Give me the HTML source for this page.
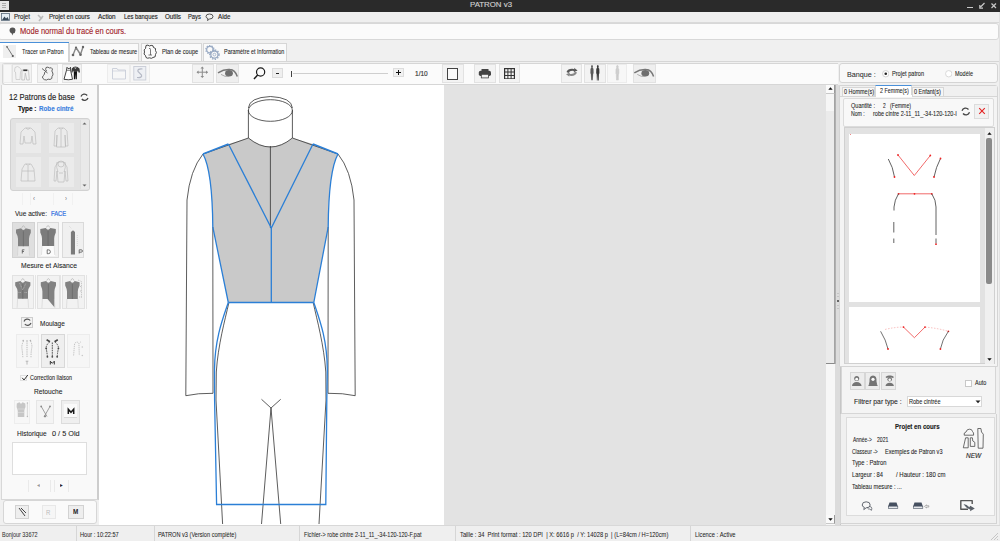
<!DOCTYPE html>
<html><head><meta charset="utf-8"><title>PATRON v3</title>
<style>
html,body{margin:0;padding:0;}
body{width:1000px;height:541px;position:relative;overflow:hidden;background:#f0f0f0;font-family:"Liberation Sans",sans-serif;color:#222;}
body div, body svg{position:absolute;box-sizing:border-box;}
.t{white-space:nowrap;line-height:1;}
</style></head><body>

<div style="left:0px;top:0px;width:1000px;height:11.5px;background:#2a2a2a;"></div>
<div style="left:0px;top:0.5px;width:8.5px;height:9px;background:#e4e4e4;"></div>
<div style="left:1.5px;top:2.5px;width:4px;height:0.8px;background:#aaa;"></div>
<div style="left:1.5px;top:4.5px;width:4px;height:0.8px;background:#aaa;"></div>
<div style="left:1.5px;top:6.5px;width:4px;height:0.8px;background:#aaa;"></div>
<svg style="left:466.80px;top:-2.10px" width="48.00" height="12.60"><text x="3" y="9.10" font-family="Liberation Sans" font-size="7" fill="#cfcfcf" stroke="#cfcfcf" stroke-width="0.14" textLength="42.00" lengthAdjust="spacingAndGlyphs" >PATRON v3</text></svg>
<div style="left:967px;top:6.5px;width:5.5px;height:1.1px;background:#c8c8c8;"></div>
<svg style="left:978px;top:1.5px;" width="8" height="8" viewBox="0 0 8 8"><path d="M6.5 1 L2.5 5 M1.8 3 V6.2 H5" stroke="#c8c8c8" stroke-width="1.2" fill="none"/></svg>
<svg style="left:990px;top:1.5px;" width="8" height="8" viewBox="0 0 8 8"><path d="M1.5 1.5 L6 6 M6 1.5 L1.5 6" stroke="#c8c8c8" stroke-width="1.2" fill="none"/></svg>
<div style="left:0px;top:11.5px;width:1000px;height:11.5px;background:#efefef;border-bottom:1px solid #dadada;"></div>
<svg style="left:1px;top:13px;" width="9" height="8" viewBox="0 0 9 8"><rect x="0.5" y="0.5" width="8" height="7" fill="#e6eef5" stroke="#5a6a7a" stroke-width="0.8"/><path d="M1 7 L3.5 3.5 L5 5.5 L6.5 4 L8 7Z" fill="#3a4a5a"/></svg>
<svg style="left:10.70px;top:10.55px" width="21.90" height="11.70"><text x="3" y="8.45" font-family="Liberation Sans" font-size="6.5" fill="#1e1e1e" stroke="#1e1e1e" stroke-width="0.14" textLength="15.90" lengthAdjust="spacingAndGlyphs" >Projet</text></svg>
<svg style="left:36px;top:12.5px;" width="9" height="9" viewBox="0 0 9 9"><path d="M2 2 L6 6 M3 8 L7 3" stroke="#bbb" stroke-width="1.6" fill="none"/></svg>
<svg style="left:45.70px;top:10.55px" width="46.80" height="11.70"><text x="3" y="8.45" font-family="Liberation Sans" font-size="6.5" fill="#1e1e1e" stroke="#1e1e1e" stroke-width="0.14" textLength="40.80" lengthAdjust="spacingAndGlyphs" >Projet en cours</text></svg>
<svg style="left:95.40px;top:10.55px" width="23.60" height="11.70"><text x="3" y="8.45" font-family="Liberation Sans" font-size="6.5" fill="#1e1e1e" stroke="#1e1e1e" stroke-width="0.14" textLength="17.60" lengthAdjust="spacingAndGlyphs" >Action</text></svg>
<svg style="left:120.60px;top:10.55px" width="39.60" height="11.70"><text x="3" y="8.45" font-family="Liberation Sans" font-size="6.5" fill="#1e1e1e" stroke="#1e1e1e" stroke-width="0.14" textLength="33.60" lengthAdjust="spacingAndGlyphs" >Les banques</text></svg>
<svg style="left:162.00px;top:10.55px" width="22.00" height="11.70"><text x="3" y="8.45" font-family="Liberation Sans" font-size="6.5" fill="#1e1e1e" stroke="#1e1e1e" stroke-width="0.14" textLength="16.00" lengthAdjust="spacingAndGlyphs" >Outils</text></svg>
<svg style="left:184.60px;top:10.55px" width="18.80" height="11.70"><text x="3" y="8.45" font-family="Liberation Sans" font-size="6.5" fill="#1e1e1e" stroke="#1e1e1e" stroke-width="0.14" textLength="12.80" lengthAdjust="spacingAndGlyphs" >Pays</text></svg>
<svg style="left:205px;top:13px;" width="9" height="8" viewBox="0 0 9 8"><path d="M1 3.5 Q1 1 4.5 1 Q8 1 8 3.5 Q8 6 4.5 6 L2.5 7.5 L3 5.6 Q1 5 1 3.5Z" fill="none" stroke="#444" stroke-width="0.9"/></svg>
<svg style="left:215.40px;top:10.55px" width="18.40" height="11.70"><text x="3" y="8.45" font-family="Liberation Sans" font-size="6.5" fill="#1e1e1e" stroke="#1e1e1e" stroke-width="0.14" textLength="12.40" lengthAdjust="spacingAndGlyphs" >Aide</text></svg>
<div style="left:0px;top:22.6px;width:1000px;height:18px;background:#f0f0f0;"></div>
<div style="left:-2px;top:22.6px;width:1000.5px;height:17.8px;background:#fbfbfb;border:1px solid #d8d8d8;border-radius:3px;"></div>
<svg style="left:9px;top:26.5px;" width="7" height="9" viewBox="0 0 7 9"><path d="M3.5 0.5 Q6.5 0.5 6.5 3.5 Q6.5 6 4 6.5 L3.5 8.5 L2.5 6.3 Q0.5 5.5 0.5 3.5 Q0.5 0.5 3.5 0.5Z" fill="#555"/></svg>
<svg style="left:16.90px;top:22.69px" width="112.20" height="15.66"><text x="3" y="11.31" font-family="Liberation Sans" font-size="8.7" fill="#a3262b" stroke="#a3262b" stroke-width="0.14" textLength="106.20" lengthAdjust="spacingAndGlyphs" >Mode normal du tracé en cours.</text></svg>
<div style="left:0px;top:40.5px;width:1000px;height:21px;background:#f0f0f0;"></div>
<div style="left:0px;top:60.5px;width:1000px;height:1px;background:#d6d6d6;"></div>
<div style="left:0px;top:42px;width:69px;height:19.5px;background:#ffffff;border-right:1px solid #d4d4d4;"></div>
<div style="left:0px;top:41.6px;width:69px;height:1.6px;background:#4a90d9;"></div>
<div style="left:69.3px;top:43.2px;width:70.2px;height:17.8px;background:#fafafa;border:1px solid #d6d6d6;border-bottom:none;"></div>
<div style="left:140.5px;top:43.2px;width:61px;height:17.8px;background:#fafafa;border:1px solid #d6d6d6;border-bottom:none;"></div>
<div style="left:202.8px;top:43.2px;width:84.5px;height:17.8px;background:#fafafa;border:1px solid #d6d6d6;border-bottom:none;"></div>
<svg style="left:3px;top:45px;" width="13" height="13" viewBox="0 0 13 13"><rect x="0" y="0" width="13" height="13" fill="#efefef"/><path d="M4 1.8 L9.8 11" stroke="#777" stroke-width="1"/><circle cx="4" cy="1.8" r="0.9" fill="#666"/><circle cx="9.8" cy="11" r="1.1" fill="#555"/></svg>
<svg style="left:19.20px;top:45.16px" width="47.50" height="12.24"><text x="3" y="8.84" font-family="Liberation Sans" font-size="6.8" fill="#1e1e1e" stroke="#1e1e1e" stroke-width="0.08" textLength="41.50" lengthAdjust="spacingAndGlyphs" >Tracer un Patron</text></svg>
<svg style="left:71px;top:45px;" width="14" height="12" viewBox="0 0 14 12"><path d="M2 10 L5 2.5 L9.5 9.5 L12 2" stroke="#888" stroke-width="1.4" fill="none" stroke-linejoin="round"/><circle cx="2" cy="10" r="1.3" fill="#666"/><circle cx="5" cy="2.5" r="1.1" fill="#666"/><circle cx="9.5" cy="9.8" r="1.3" fill="#666"/><circle cx="12" cy="2" r="1.2" fill="#666"/></svg>
<svg style="left:87.00px;top:45.16px" width="53.20" height="12.24"><text x="3" y="8.84" font-family="Liberation Sans" font-size="6.8" fill="#1e1e1e" stroke="#1e1e1e" stroke-width="0.08" textLength="47.20" lengthAdjust="spacingAndGlyphs" >Tableau de mesure</text></svg>
<svg style="left:0;top:0" width="300" height="70" viewBox="0 0 300 70"><path d="M146 45.5 Q148 44.5 149.5 46 Q151 44.8 153 45.8 L153.5 47.5 Q156.5 48 155.5 50.5 Q157.3 52.5 155.5 54.5 Q156 57.5 153 57.5 Q151.5 59 149.5 57.8 Q147.5 58.8 146 57.5 L145.5 55.5 Q143 54.5 144.5 52 Q143.3 49.5 145.5 48.5Z" fill="none" stroke="#333" stroke-width="0.9"/><path d="M149 48.5 Q150.5 48 150.5 49.5 V55 M148.5 55 H152" stroke="#444" stroke-width="0.7" fill="none"/></svg>
<svg style="left:158.50px;top:45.16px" width="42.20" height="12.24"><text x="3" y="8.84" font-family="Liberation Sans" font-size="6.8" fill="#1e1e1e" stroke="#1e1e1e" stroke-width="0.08" textLength="36.20" lengthAdjust="spacingAndGlyphs" >Plan de coupe</text></svg>
<svg style="left:0;top:0" width="300" height="70" viewBox="0 0 300 70"><g fill="none" stroke="#9aabc4"><circle cx="209.9" cy="49.6" r="3.2" stroke-width="1.2"/><circle cx="209.9" cy="49.6" r="4" stroke-width="1.4" stroke-dasharray="1.3 1.2"/><circle cx="214.4" cy="54.6" r="3.6" fill="#fafafa" stroke-width="1.3"/><circle cx="214.4" cy="54.6" r="4.6" stroke-width="1.5" stroke-dasharray="1.4 1.3"/><circle cx="214.4" cy="54.6" r="1.4" stroke-width="0.8"/></g></svg>
<svg style="left:220.50px;top:45.16px" width="66.40" height="12.24"><text x="3" y="8.84" font-family="Liberation Sans" font-size="6.8" fill="#1e1e1e" stroke="#1e1e1e" stroke-width="0.08" textLength="60.40" lengthAdjust="spacingAndGlyphs" >Paramètre et Information</text></svg>
<div style="left:1.5px;top:63px;width:836px;height:21.5px;background:#fbfbfb;border:1px solid #d6d6d6;border-right:none;border-radius:3px 0 0 3px;"></div>
<div style="left:2.5px;top:64px;width:9.0px;height:18.799999999999997px;background:#f7f7f7;border:1px solid #ececec;"></div>
<div style="left:12.3px;top:64px;width:19.900000000000002px;height:18.799999999999997px;background:#f3f3f3;border:1px solid #e2e2e2;"></div>
<div style="left:37.2px;top:64px;width:20.5px;height:18.799999999999997px;background:#f3f3f3;border:1px solid #e2e2e2;"></div>
<div style="left:62.2px;top:64px;width:20.299999999999997px;height:18.799999999999997px;background:#f3f3f3;border:1px solid #e2e2e2;"></div>
<div style="left:107px;top:64px;width:23px;height:18.799999999999997px;background:#f7f7f7;border:1px solid #ececec;"></div>
<div style="left:130px;top:64px;width:20px;height:18.799999999999997px;background:#f7f7f7;border:1px solid #ececec;"></div>
<div style="left:191.7px;top:64px;width:22.80000000000001px;height:18.799999999999997px;background:#f3f3f3;border:1px solid #e2e2e2;"></div>
<div style="left:216px;top:64px;width:23.19999999999999px;height:18.799999999999997px;background:#efefef;border:1px solid #e2e2e2;"></div>
<div style="left:441.7px;top:64px;width:22.19999999999999px;height:18.799999999999997px;background:#f3f3f3;border:1px solid #e2e2e2;"></div>
<div style="left:473.6px;top:64px;width:22.69999999999999px;height:18.799999999999997px;background:#f3f3f3;border:1px solid #e2e2e2;"></div>
<div style="left:499.2px;top:64px;width:21.30000000000001px;height:18.799999999999997px;background:#f3f3f3;border:1px solid #e2e2e2;"></div>
<div style="left:560.8px;top:64px;width:21.200000000000045px;height:18.799999999999997px;background:#f3f3f3;border:1px solid #e2e2e2;"></div>
<div style="left:584.3px;top:64px;width:22.0px;height:18.799999999999997px;background:#f3f3f3;border:1px solid #e2e2e2;"></div>
<div style="left:607.4px;top:64px;width:19.800000000000068px;height:18.799999999999997px;background:#f7f7f7;border:1px solid #ececec;"></div>
<div style="left:632.7px;top:64px;width:23.59999999999991px;height:18.799999999999997px;background:#efefef;border:1px solid #e2e2e2;"></div>
<svg style="left:0;top:0" width="700" height="90" viewBox="0 0 700 90"><path d="M15 67.5 L17.5 66.5 L19.5 67.5 L21.5 70 L20.5 72 L20 79.5 L16 79.5 L15.5 72 L14.5 71.5Z" fill="none" stroke="#c4c4c4" stroke-width="0.7"/><path d="M22 70 L28.5 70 L29.3 80 L26.8 80 L25.3 73 L24.5 80 L21.8 80Z" fill="none" stroke="#b8b8b8" stroke-width="0.7"/><rect x="23.3" y="69.5" width="4" height="1.6" fill="#333"/><path d="M46 67.5 Q48 66.5 49.5 68 Q51.5 67 52.5 69 Q51 71 52.8 73 Q53.5 75 52 76.5 Q52.5 79 50 79.5 Q48 78.5 46.5 80 Q44 80 43 78.5 Q41.5 77 43.5 75.5 Q45 74 44.5 72.5 L46.5 71 Q45 69.5 46 67.5Z" fill="none" stroke="#555" stroke-width="0.9"/><path d="M42 68.5 L47.5 73" stroke="#555" stroke-width="0.9"/><path d="M67 67.3 L68 68.6 L69.5 68.6 L70.5 67.3 L70.6 70.3 L72.5 79.3 Q68.5 80.2 64 79.3 L66.5 70.3Z" fill="#fff" stroke="#222" stroke-width="0.85"/><path d="M66.5 70.3 H70.6" stroke="#222" stroke-width="0.6"/><path d="M73.5 67 L75.3 66.5 L77.5 67 L79.5 68.5 L80 72.5 L78.5 72.5 L78 70.5 L77 72 L73.8 72 L73 70.5 L72.5 72.5 L71.3 72.5 L71.8 68.5Z" fill="#3a3a3a"/><path d="M73.8 72 L77 72 L76.8 79.3 L75.6 79.3 L75.4 74 L75 79.3 L73.9 79.3Z" fill="#111"/><path d="M74.6 66.8 L75.4 69 L76.3 66.8" stroke="#ddd" stroke-width="0.5" fill="none"/><path d="M112.5 68.5 L117 68.5 L118 70 L125.5 70 L125.5 79 L112.5 79Z" fill="none" stroke="#c8cdd8" stroke-width="0.9"/><path d="M112.5 71 H125.5" stroke="#c8cdd8" stroke-width="0.7"/><rect x="133.8" y="66.5" width="12" height="13.5" fill="#eef0f4" stroke="#c8ccd6" stroke-width="0.9"/><path d="M142.5 69 Q137 68.5 138 71.5 Q140 73.5 141.5 75 Q142.5 78 137 77.5" stroke="#b5b9c5" stroke-width="1.2" fill="none"/><path d="M202.3 67.3 V77.2 M197.3 72.2 H207.3" stroke="#8c8c8c" stroke-width="1"/><path d="M202.3 66.5 L200.5 68.6 H204.1Z M202.3 78 L200.5 75.9 H204.1Z M196.5 72.2 L198.6 70.4 V74Z M208.1 72.2 L206 70.4 V74Z" fill="#8c8c8c"/><path d="M218 72.9 Q224 69.10000000000001 230 69.60000000000001 Q235 69.9 237.3 76.5" stroke="#777" stroke-width="1.5" fill="none"/><ellipse cx="229" cy="73.2" rx="3.9" ry="3.2" fill="#6e6e6e"/><path d="M221 74.4 Q225 77.2 229 76.4" stroke="#999" stroke-width="0.8" fill="none"/><path d="M634.3 72.9 Q640.3 69.10000000000001 646.3 69.60000000000001 Q651.3 69.9 653.5999999999999 76.5" stroke="#777" stroke-width="1.5" fill="none"/><ellipse cx="645.3" cy="73.2" rx="3.9" ry="3.2" fill="#6e6e6e"/><path d="M637.3 74.4 Q641.3 77.2 645.3 76.4" stroke="#999" stroke-width="0.8" fill="none"/><circle cx="260.6" cy="72" r="4.1" fill="none" stroke="#1a1a1a" stroke-width="1.2"/><path d="M257.6 75 L254 79.1" stroke="#1a1a1a" stroke-width="1.5"/><rect x="481.5" y="69" width="7" height="2.5" fill="#444"/><rect x="478.8" y="70.8" width="12.2" height="5.2" rx="1.8" fill="#444"/><rect x="481.3" y="74.3" width="7.2" height="3.6" fill="#f0f0f0" stroke="#444" stroke-width="0.8"/><path d="M566.5 72 Q568 68.5 572.5 68.8 L574.5 69.3 L574 67.8 L577.6 70.5 L573.6 72.2 L574 71 Q570 70 568.5 73Z" fill="#555"/><path d="M577 72.5 Q575.5 76.2 571 75.9 L569 75.4 L569.5 76.8 L566 74.2 L570 72.5 L569.6 73.8 Q573.5 74.6 575 71.8Z" fill="#888"/><path transform="translate(592,64.9) scale(0.57375,0.95625)" d="M0 0 Q1.6 0 1.6 1.7 Q1.6 2.6 1 3 L2.6 4 L2.8 9 L2 9.2 L1.6 16 L0.4 16 L0 10 L-0.4 16 L-1.6 16 L-2 9.2 L-2.8 9 L-2.6 4 L-1 3 Q-1.6 2.6 -1.6 1.7 Q-1.6 0 0 0Z" fill="#5a5a5a" stroke="none" stroke-width="0.6"/><path transform="translate(597.8,64.9) scale(0.5812499999999999,0.96875)" d="M0 0 Q1.6 0 1.6 1.7 Q1.6 2.6 1 3 L2.6 4 L2.8 9 L2 9.2 L1.6 16 L0.4 16 L0 10 L-0.4 16 L-1.6 16 L-2 9.2 L-2.8 9 L-2.6 4 L-1 3 Q-1.6 2.6 -1.6 1.7 Q-1.6 0 0 0Z" fill="#3a3a3a" stroke="none" stroke-width="0.6"/><path transform="translate(617.4,65.3) scale(0.555,0.925)" d="M0 0 Q1.6 0 1.6 1.7 Q1.6 2.6 1 3 L2.6 4 L2.8 9 L2 9.2 L1.6 16 L0.4 16 L0 10 L-0.4 16 L-1.6 16 L-2 9.2 L-2.8 9 L-2.6 4 L-1 3 Q-1.6 2.6 -1.6 1.7 Q-1.6 0 0 0Z" fill="#cfcfcf" stroke="#c4c4c4" stroke-width="0.6"/></svg>
<div style="left:272.2px;top:67.8px;width:10.5px;height:10px;background:#efefef;border:1px solid #dcdcdc;"></div>
<div style="left:276.2px;top:73.1px;width:3px;height:1.4px;background:#222;"></div>
<div style="left:291.2px;top:71px;width:1.3px;height:5.5px;background:#444;"></div>
<div style="left:292.5px;top:72.5px;width:95px;height:0.9px;background:#cfcfcf;"></div>
<div style="left:393px;top:67.7px;width:10.8px;height:9.8px;background:#f1f1f1;border:1px solid #ddd;"></div>
<div style="left:395.6px;top:72px;width:5.6px;height:1.3px;background:#111;"></div>
<div style="left:397.75px;top:69.9px;width:1.3px;height:5.6px;background:#111;"></div>
<svg style="left:412.00px;top:67.16px" width="18.70" height="12.24"><text x="3" y="8.84" font-family="Liberation Sans" font-size="6.8" fill="#333" stroke="#333" stroke-width="0.14" textLength="12.70" lengthAdjust="spacingAndGlyphs" >1/10</text></svg>
<div style="left:447px;top:68px;width:11px;height:11.5px;background:#fafafa;border:1.3px solid #444;"></div>
<svg style="left:503.5px;top:67.5px;" width="11" height="11.5" viewBox="0 0 11 11.5"><rect x="0.6" y="0.6" width="9.8" height="10.3" fill="none" stroke="#333" stroke-width="1.2"/><path d="M3.9 0.6 V10.9 M7.1 0.6 V10.9 M0.6 4 H10.4 M0.6 7.5 H10.4" stroke="#333" stroke-width="1"/></svg>
<div style="left:1px;top:85px;width:98px;height:414.5px;background:#f9f9f9;border:1px solid #d8d8d8;border-right:2px solid #cdcdcd;border-top:none;"></div>
<svg style="left:6.20px;top:89.08px" width="71.80" height="15.12"><text x="3" y="10.92" font-family="Liberation Sans" font-size="8.4" fill="#1e1e1e" stroke="#1e1e1e" stroke-width="0.14" textLength="65.80" lengthAdjust="spacingAndGlyphs" >12 Patrons de base</text></svg>
<svg style="left:80px;top:93px;" width="9" height="8.5" viewBox="0 0 9 8.5"><path d="M7.2 2.5 A3.6 3.6 0 0 0 1 3.5" stroke="#444" stroke-width="1.3" fill="none"/><path d="M1.8 6 A3.6 3.6 0 0 0 8 5" stroke="#444" stroke-width="1.3" fill="none"/></svg>
<svg style="left:14.50px;top:102.29px" width="24.50" height="12.06"><text x="3" y="8.71" font-family="Liberation Sans" font-size="6.7" fill="#111" stroke="#111" stroke-width="0.14" textLength="18.50" lengthAdjust="spacingAndGlyphs" font-weight="bold">Type :</text></svg>
<svg style="left:36.30px;top:102.29px" width="40.50" height="12.06"><text x="3" y="8.71" font-family="Liberation Sans" font-size="6.7" fill="#3b7fe0" stroke="#3b7fe0" stroke-width="0.14" textLength="34.50" lengthAdjust="spacingAndGlyphs" font-weight="bold">Robe cintré</text></svg>
<div style="left:9.7px;top:118.3px;width:80.2px;height:72.4px;background:#e3e3e3;border:1px solid #d2d2d2;border-radius:3px;"></div>
<div style="left:15.5px;top:122.5px;width:25px;height:30.5px;background:#ebebeb;"></div>
<div style="left:48.8px;top:122.5px;width:25px;height:30.5px;background:#ebebeb;"></div>
<div style="left:15.5px;top:156.6px;width:25px;height:30px;background:#ebebeb;"></div>
<div style="left:48.8px;top:156.6px;width:25px;height:30px;background:#ebebeb;"></div>
<div style="left:79.5px;top:120px;width:9.2px;height:69px;background:#e9e9e9;border-left:1px solid #dedede;"></div>
<svg style="left:81.5px;top:121.5px;" width="5" height="3" viewBox="0 0 5 3"><path d="M0.5 2.5 L2.5 0.5 L4.5 2.5Z" fill="#666"/></svg>
<svg style="left:81.5px;top:183.5px;" width="5" height="3" viewBox="0 0 5 3"><path d="M0.5 0.5 L2.5 2.5 L4.5 0.5Z" fill="#666"/></svg>
<svg style="left:19px;top:126px;" width="18" height="24" viewBox="0 0 18 24"><path d="M6 2 L12 2 L16 6 L17 18 L14 18 L13 10 L12 17 L6 17 L5 10 L4 18 L1 18 L2 6Z" fill="none" stroke="#b2b2b2" stroke-width="0.55"/><path d="M7 2 Q9 5 11 2" fill="none" stroke="#b2b2b2" stroke-width="0.55"/></svg>
<svg style="left:52px;top:126px;" width="18" height="24" viewBox="0 0 18 24"><path d="M6 2 L12 2 L15 5 L16 20 L13.5 20 L13 9 L13.5 21 L4.5 21 L5 9 L4.5 20 L2 20 L3 5Z" fill="none" stroke="#b2b2b2" stroke-width="0.55"/><path d="M7 2 Q9 5 11 2 M9 4 V21" fill="none" stroke="#b2b2b2" stroke-width="0.55"/></svg>
<svg style="left:19px;top:161px;" width="18" height="23" viewBox="0 0 18 23"><path d="M6 3 L12 3 L15 8 L16 20 L2 20 L3 8Z" fill="none" stroke="#b2b2b2" stroke-width="0.55"/><path d="M7 3 Q9 6 11 3 M9 5 V20 M3 10 L15 10" fill="none" stroke="#b2b2b2" stroke-width="0.55"/></svg>
<svg style="left:52px;top:159px;" width="18" height="26" viewBox="0 0 18 26"><path d="M6 3 L12 3 L15 8 L16 22 L14 22 L13 12 L12 23 L6 23 L5 12 L4 22 L2 22 L3 8Z" fill="none" stroke="#b2b2b2" stroke-width="0.55"/><circle cx="9" cy="5" r="3" fill="none" stroke="#b2b2b2" stroke-width="0.55"/><path d="M5 3 Q4 9 6 13 M13 3 Q14 9 12 13 M7 14 L11 14" fill="none" stroke="#b2b2b2" stroke-width="0.55"/></svg>
<div style="left:22px;top:193px;width:0.8px;height:12px;background:#f1f1f1;"></div>
<div style="left:30px;top:193px;width:0.8px;height:12px;background:#f1f1f1;"></div>
<div style="left:53px;top:193px;width:0.8px;height:12px;background:#f1f1f1;"></div>
<div style="left:72px;top:193px;width:0.8px;height:12px;background:#f1f1f1;"></div>
<div class="t" style="left:32.8px;top:195.71px;font-size:6.60px;transform:scaleX(0.9091);transform-origin:left;color:#777;">‹</div>
<div class="t" style="left:64.5px;top:195.71px;font-size:6.60px;transform:scaleX(0.9091);transform-origin:left;color:#777;">›</div>
<svg style="left:12.20px;top:207.16px" width="38.00" height="12.24"><text x="3" y="8.84" font-family="Liberation Sans" font-size="6.8" fill="#1e1e1e" stroke="#1e1e1e" stroke-width="0.08" textLength="32.00" lengthAdjust="spacingAndGlyphs" >Vue active:</text></svg>
<svg style="left:47.80px;top:207.16px" width="21.20" height="12.24"><text x="3" y="8.84" font-family="Liberation Sans" font-size="6.8" fill="#2f6fe0" stroke="#2f6fe0" stroke-width="0.2" textLength="15.20" lengthAdjust="spacingAndGlyphs" >FACE</text></svg>
<div style="left:12.3px;top:221.7px;width:22.3px;height:35.9px;background:#dfdfdf;border:1px solid #d2d2d2;"></div>
<div style="left:37.3px;top:221.7px;width:21.9px;height:35.9px;background:#f0f0f0;border:1px solid #dadada;"></div>
<div style="left:62.2px;top:221.7px;width:22.3px;height:35.9px;background:#f0f0f0;border:1px solid #dadada;"></div>
<div style="left:18px;top:246.3px;width:11px;height:9.5px;background:#e9e9e9;"></div>
<div style="left:40.8px;top:245.9px;width:14px;height:10px;background:#fbfbfb;"></div>
<svg style="left:18.00px;top:258.90px" width="62.00" height="12.60"><text x="3" y="9.10" font-family="Liberation Sans" font-size="7" fill="#1e1e1e" stroke="#1e1e1e" stroke-width="0.08" textLength="56.00" lengthAdjust="spacingAndGlyphs" >Mesure et Aisance</text></svg>
<div style="left:12px;top:275.2px;width:22px;height:34px;background:#f2f2f2;border:1px solid #e2e2e2;"></div>
<div style="left:37.2px;top:275.2px;width:22.4px;height:34px;background:#f2f2f2;border:1px solid #e2e2e2;"></div>
<div style="left:62.4px;top:275.2px;width:22.8px;height:34px;background:#f2f2f2;border:1px solid #e2e2e2;"></div>
<div style="left:34.6px;top:275.2px;width:1.2px;height:34px;background:#e4e4e4;"></div>
<div style="left:60.2px;top:275.2px;width:1.2px;height:34px;background:#e4e4e4;"></div>
<div style="left:85.5px;top:275.2px;width:1.2px;height:34px;background:#e4e4e4;"></div>
<svg style="left:0;top:0" width="100" height="541" viewBox="0 0 100 541"><path d="M16 229.4 L21.099999999999998 228.20000000000002 Q23.4 231.8 25.7 228.20000000000002 L30.8 229.4 L30.8 232.8 Q29.2 235.8 29 238.8 L29 246.3  L18 246.3 L18 238.8 Q17.8 235.8 16 232.8Z" fill="#828282"/><path d="M23.4 231.3 V246.3" stroke="#5a5a5a" stroke-width="0.5"/><path d="M21.799999999999997 227.8 Q23.4 223.8 25.0 227.8" stroke="#aaa" stroke-width="0.6" fill="none"/><path d="M18 246.3 L17.5 255.3 M29 246.3 L29.5 255.3" stroke="#d0d0d0" stroke-width="0.6" fill="none"/><path d="M40.3 229.1 L45.75 227.9 Q48.05 231.5 50.349999999999994 227.9 L55.8 229.1 L55.8 232.5 Q54.400000000000006 235.5 54.2 238.5 L54.2 245.9  L42 245.9 L42 238.5 Q41.8 235.5 40.3 232.5Z" fill="#7c7c7c"/><path d="M48.05 231.0 V245.9" stroke="#5a5a5a" stroke-width="0.5"/><path d="M46.449999999999996 227.5 Q48.05 223.5 49.65 227.5" stroke="#aaa" stroke-width="0.6" fill="none"/><path d="M42 245.9 L41.5 254.9 M54.2 245.9 L54.7 254.9" stroke="#d0d0d0" stroke-width="0.6" fill="none"/><path d="M70.9 254.6 L70.9 232 L73 230.2 L75 232 L75 254.6Z" fill="#7a7a7a"/><path d="M77.3 235 V247 M69 226 L72 229" stroke="#c0c0c0" stroke-width="0.5" stroke-dasharray="1 1" fill="none"/><path d="M22.3 253.5 V249.8 H24.4 M22.3 251.5 H24" stroke="#555" stroke-width="0.8" fill="none"/><path d="M47.2 249.8 V253.7 H48.3 Q50.4 253.7 50.4 251.75 Q50.4 249.8 48.3 249.8Z" stroke="#555" stroke-width="0.8" fill="none"/><path d="M79.2 253.5 V249.8 H81 Q82.5 249.8 82.5 251 Q82.5 252.2 81 252.2 H79.2" stroke="#555" stroke-width="0.8" fill="none"/><path d="M15.2 282.20000000000005 L20.499999999999996 281.0 Q22.799999999999997 284.6 25.099999999999998 281.0 L30.4 282.20000000000005 L30.4 285.6 Q28.2 288.6 28 291.6 L28 298.8  L17.6 298.8 L17.6 291.6 Q17.400000000000002 288.6 15.2 285.6Z" fill="#828282"/><path d="M22.799999999999997 284.1 V298.8" stroke="#5a5a5a" stroke-width="0.5"/><path d="M21.199999999999996 280.6 Q22.799999999999997 276.6 24.4 280.6" stroke="#aaa" stroke-width="0.6" fill="none"/><path d="M17.6 298.8 L17.1 307.8 M28 298.8 L28.5 307.8" stroke="#d0d0d0" stroke-width="0.6" fill="none"/><path d="M19.5 283 L22.8 290 L26 283 M18.5 292.5 H21 M24.5 292.5 H27" stroke="#c8c8c8" stroke-width="0.6" stroke-dasharray="1 0.7" fill="none"/><path d="M40.8 282.20000000000005 L46.1 281.0 Q48.4 284.6 50.699999999999996 281.0 L56 282.20000000000005 L56 285.6 Q54.6 288.6 54.4 291.6 L54.4 299 L54.4 307.2 L47.5 299 L42.4 299 L42.4 291.6 Q42.199999999999996 288.6 40.8 285.6Z" fill="#828282"/><path d="M48.4 284.1 V299" stroke="#5a5a5a" stroke-width="0.5"/><path d="M46.8 280.6 Q48.4 276.6 50.0 280.6" stroke="#aaa" stroke-width="0.6" fill="none"/><path d="M42.4 299 L41.9 308 M54.4 299 L54.9 308" stroke="#d0d0d0" stroke-width="0.6" fill="none"/><path d="M65.2 282.20000000000005 L70.10000000000001 281.0 Q72.4 284.6 74.7 281.0 L79.6 282.20000000000005 L79.6 285.6 Q78.0 288.6 77.8 291.6 L77.8 299  L67 299 L67 291.6 Q66.8 288.6 65.2 285.6Z" fill="#828282"/><path d="M72.4 284.1 V299" stroke="#5a5a5a" stroke-width="0.5"/><path d="M70.80000000000001 280.6 Q72.4 276.6 74.0 280.6" stroke="#aaa" stroke-width="0.6" fill="none"/><path d="M67 299 L66.5 308 M77.8 299 L78.3 308" stroke="#d0d0d0" stroke-width="0.6" fill="none"/><path d="M78 280 L81.5 281.5 V298 M80 286.5 H82 M80 291 H82 M79 297 H81.5" stroke="#999" stroke-width="0.5" stroke-dasharray="1 0.8" fill="none"/></svg>
<div style="left:21.4px;top:317px;width:11.6px;height:11.2px;background:#f2f2f2;border:1px solid #cdcdcd;"></div>
<svg style="left:22.7px;top:318.4px;" width="9" height="8.5" viewBox="0 0 9 8.5"><path d="M7.2 2.5 A3.6 3.6 0 0 0 1 3.5" stroke="#555" stroke-width="1.2" fill="none"/><path d="M1.8 6 A3.6 3.6 0 0 0 8 5" stroke="#555" stroke-width="1.2" fill="none"/></svg>
<svg style="left:36.80px;top:316.90px" width="30.80" height="12.60"><text x="3" y="9.10" font-family="Liberation Sans" font-size="7" fill="#1e1e1e" stroke="#1e1e1e" stroke-width="0.08" textLength="24.80" lengthAdjust="spacingAndGlyphs" >Moulage</text></svg>
<div style="left:16px;top:334.3px;width:22.8px;height:33.3px;background:#f6f6f6;border:1px solid #ececec;"></div>
<div style="left:41px;top:334.3px;width:23.7px;height:33.3px;background:#efefef;border:1px solid #d8d8d8;"></div>
<div style="left:66.5px;top:334.3px;width:23.3px;height:33.3px;background:#f6f6f6;border:1px solid #ececec;"></div>
<svg style="left:0;top:0" width="100" height="541" viewBox="0 0 100 541"><g fill="none" stroke="#b4b4b4" stroke-width="0.9" stroke-dasharray="1.3 0.9"><path d="M23.5 341 Q21.5 345 21.9 348.3 Q22.5 352 22.8 357.2"/><path d="M30.5 341 Q32.5 345 31.7 348.3 Q31 352 31 357.2"/><path d="M27 342.5 V357.2"/></g><g fill="#b0b0b0"><circle cx="23.2" cy="340.6" r="0.8"/><circle cx="27" cy="341" r="0.8"/><circle cx="30.4" cy="340.6" r="0.8"/></g><path d="M25.7 361.2 H28.3 M27 361.2 V364.6" stroke="#aaa" stroke-width="0.8"/><g fill="none" stroke="#505050" stroke-width="1" stroke-dasharray="1.6 0.8"><path d="M49.5 342 Q46 345 46.1 348.3 Q47 352 47.4 356.8"/><path d="M55 342 Q58.5 345 58.5 348.3 Q57.5 352 57.2 356.8"/><path d="M52.3 342.5 V357"/></g><path d="M46.6 339.8 L50 341.8 M57.8 339.8 L54.5 341.8" stroke="#444" stroke-width="1.6"/><g fill="#444"><circle cx="46.2" cy="348.3" r="0.9"/><circle cx="58.4" cy="348.3" r="0.9"/><circle cx="47.4" cy="356.8" r="0.9"/><circle cx="57.2" cy="356.8" r="0.9"/><circle cx="52.3" cy="356.8" r="0.9"/></g><path d="M50.3 364.5 V361.2 L52.3 363.3 L54.3 361.2 V364.5" stroke="#333" stroke-width="1" fill="none"/><path d="M73.6 355.5 L74.6 343.5 Q76.5 341 78.9 343 L79.3 355.5" stroke="#c0c0c0" stroke-width="0.9" fill="none" stroke-dasharray="1.3 0.8"/><g fill="#c8c8c8"><circle cx="82.3" cy="347" r="0.8"/><circle cx="82.3" cy="355.5" r="0.8"/><circle cx="80.5" cy="342" r="0.6"/></g></svg>
<div style="left:20.2px;top:374.6px;width:7px;height:6.4px;background:#fafafa;border:1px solid #e0e0e0;"></div>
<svg style="left:20.5px;top:373.5px;" width="8" height="7" viewBox="0 0 8 7"><path d="M1.2 3.8 L3 6 L6.8 1" stroke="#333" stroke-width="1" fill="none"/></svg>
<svg style="left:27.20px;top:371.16px" width="48.00" height="12.24"><text x="3" y="8.84" font-family="Liberation Sans" font-size="6.8" fill="#1e1e1e" stroke="#1e1e1e" stroke-width="0.08" textLength="42.00" lengthAdjust="spacingAndGlyphs" >Correction liaison</text></svg>
<svg style="left:30.80px;top:385.03px" width="34.40" height="12.42"><text x="3" y="8.97" font-family="Liberation Sans" font-size="6.9" fill="#1e1e1e" stroke="#1e1e1e" stroke-width="0.08" textLength="28.40" lengthAdjust="spacingAndGlyphs" >Retouche</text></svg>
<div style="left:14.4px;top:400.4px;width:15.6px;height:23.2px;background:#f7f7f7;border:1px solid #ededed;"></div>
<div style="left:36.4px;top:400.4px;width:18px;height:23.2px;background:#f4f4f4;border:1px solid #e6e6e6;"></div>
<div style="left:61.2px;top:400.4px;width:18.4px;height:23.2px;background:#efefef;border:1px solid #dcdcdc;"></div>
<div style="left:64.4px;top:403.6px;width:12.4px;height:14px;background:#fafafa;border-bottom:1px solid #d8d8d8;"></div>
<svg style="left:0;top:0" width="100" height="541" viewBox="0 0 100 541"><path d="M16.8 403.5 L19.5 402.3 Q21 405 22.5 402.3 L25.3 403.5 L25.5 407 Q24.3 409 24.3 411 L24.3 417 L17.8 417 L17.8 411 Q17.5 409 16.6 407Z" fill="#c6c6c6"/><path d="M17.8 409 H24.3 M17.8 412.5 H24.3" stroke="#e0e0e0" stroke-width="0.6"/><path d="M27.4 403 V416.5" stroke="#c4c4c4" stroke-width="0.6"/><circle cx="27.4" cy="403" r="0.7" fill="#bbb"/><circle cx="27.4" cy="416.5" r="0.7" fill="#bbb"/><path d="M41.2 406.4 L47 416.5 M50 406.4 L44 417" stroke="#8a8a8a" stroke-width="0.8"/><g fill="#888"><circle cx="41.2" cy="406.4" r="0.9"/><circle cx="50" cy="406.4" r="0.9"/><circle cx="45" cy="416.3" r="1.1"/></g><path d="M68.3 414 V409.3 L71 412.3 L73.7 409.3 V414" stroke="#1a1a1a" stroke-width="1.5" fill="none" stroke-linejoin="miter"/></svg>
<svg style="left:13.80px;top:426.77px" width="35.60" height="12.78"><text x="3" y="9.23" font-family="Liberation Sans" font-size="7.1" fill="#1e1e1e" stroke="#1e1e1e" stroke-width="0.08" textLength="29.60" lengthAdjust="spacingAndGlyphs" >Historique</text></svg>
<svg style="left:49.00px;top:426.77px" width="33.60" height="12.78"><text x="3" y="9.23" font-family="Liberation Sans" font-size="7.1" fill="#1e1e1e" stroke="#1e1e1e" stroke-width="0.08" textLength="27.60" lengthAdjust="spacingAndGlyphs" >0 / 5 Old</text></svg>
<div style="left:12px;top:442px;width:75px;height:33px;background:#ffffff;border:1px solid #dedede;"></div>
<div style="left:28px;top:480px;width:0.8px;height:12px;background:#eaeaea;"></div>
<div style="left:50px;top:480px;width:0.8px;height:12px;background:#eaeaea;"></div>
<div style="left:53.6px;top:480px;width:0.8px;height:12px;background:#eaeaea;"></div>
<div style="left:68.4px;top:480px;width:0.8px;height:12px;background:#eaeaea;"></div>
<div class="t" style="left:37px;top:483.34px;font-size:5.50px;transform:scaleX(0.9091);transform-origin:left;color:#999;">◂</div>
<div class="t" style="left:59.5px;top:483.34px;font-size:5.50px;transform:scaleX(0.9091);transform-origin:left;color:#222;">▸</div>
<div style="left:0px;top:499.5px;width:98.5px;height:25px;background:#f0f0f0;"></div>
<div style="left:2.5px;top:500.4px;width:94px;height:24px;background:#fafafa;border:1px solid #d6d6d6;border-radius:3px;"></div>
<div style="left:14.7px;top:504.7px;width:14.8px;height:14.7px;background:#eeeeee;border:1px solid #d2d2d2;"></div>
<div style="left:41.5px;top:504.7px;width:14.8px;height:14.7px;background:#f6f6f6;border:1px solid #e8e8e8;"></div>
<div style="left:68.4px;top:504.7px;width:15.6px;height:14.7px;background:#eeeeee;border:1px solid #d2d2d2;"></div>
<svg style="left:17px;top:507px;" width="10" height="10" viewBox="0 0 10 10"><path d="M2 1 L8 9 M4 1 L9 6" stroke="#444" stroke-width="1" fill="none"/></svg>
<div class="t" style="left:46px;top:509.71px;font-size:6.60px;transform:scaleX(0.9091);transform-origin:left;color:#bbb;">R</div>
<div class="t" style="left:72.6px;top:509.43px;font-size:6.93px;transform:scaleX(0.9091);transform-origin:left;color:#222;font-weight:bold;">M</div>
<div style="left:99px;top:85px;width:345px;height:439.5px;background:#ffffff;"></div>
<div style="left:444px;top:85px;width:382.5px;height:439.5px;background:#e3e3e3;"></div>
<div style="left:826.3px;top:85px;width:8.5px;height:439.5px;background:#f7f7f7;"></div>
<div style="left:826.3px;top:85px;width:8.7px;height:8.6px;background:#fafafa;border-right:1.2px solid #9a9a9a;border-bottom:1px solid #c8c8c8;"></div>
<svg style="left:828.2px;top:87.3px;" width="5" height="3" viewBox="0 0 5 3"><path d="M0.3 2.7 L2.5 0.3 L4.7 2.7Z" fill="#111"/></svg>
<div style="left:826.3px;top:93.6px;width:9px;height:270px;background:#ebebeb;border-right:1.5px solid #a4a4a4;border-bottom:1.4px solid #8a8a8a;"></div>
<div style="left:826.3px;top:93.6px;width:7.5px;height:17.3px;background:#f6f6f6;"></div>
<div style="left:826.3px;top:515.2px;width:8.5px;height:8.5px;background:#fafafa;border-right:1.2px solid #9a9a9a;border-bottom:1px solid #c8c8c8;"></div>
<svg style="left:827.9px;top:518.2px;" width="5" height="3" viewBox="0 0 5 3"><path d="M0.3 0.3 L2.5 2.7 L4.7 0.3Z" fill="#111"/></svg>
<div style="left:835px;top:85px;width:6px;height:439.5px;background:#dcdcdc;border-right:1px solid #c6c6c6;"></div>
<div style="left:835px;top:85px;width:1px;height:278.5px;background:#b0b0b0;"></div>
<div style="left:837px;top:300px;width:1.5px;height:2px;background:#666;"></div>
<div style="left:836.5px;top:293px;width:2.5px;height:0.6px;background:#c4c4c4;"></div>
<div style="left:836.5px;top:296px;width:2.5px;height:0.6px;background:#c4c4c4;"></div>
<div style="left:836.5px;top:305px;width:2.5px;height:0.6px;background:#c4c4c4;"></div>
<div style="left:836.5px;top:308px;width:2.5px;height:0.6px;background:#c4c4c4;"></div>
<svg style="left:0;top:0" width="1000" height="541" viewBox="0 0 1000 541">
<path d="M203 154 L228.4 144 L248.5 138 Q270 155 292.5 138 L313 144 L338 154 C332 165 328.5 190 328.2 227 L313.8 302.5 L228.3 302.5 L212.8 227 C212.5 190 209 165 203 154Z" fill="#c9c9c9"/>
<ellipse cx="270.4" cy="110.5" rx="22" ry="10.8" stroke="#333" stroke-width="0.8" fill="none"/>
<path d="M248.4 108 Q249 97.5 270.4 96.5 Q291.8 97.5 292.4 108" stroke="#333" stroke-width="0.8" fill="none"/>
<path d="M248.4 110 V138 M292.4 110 V138" stroke="#333" stroke-width="0.8" fill="none"/>
<path d="M248.4 138 Q270.4 156 292.4 138" stroke="#333" stroke-width="0.8" fill="none"/>
<path d="M248.4 138 L203 154 M292.4 138 L338 154" stroke="#333" stroke-width="0.8" fill="none"/>
<path d="M270.4 146 V228" stroke="#333" stroke-width="0.8" fill="none"/>
<path d="M203 154 Q190 170 187 200 L185.8 395.7 Q198 393 213 393.3 L212.8 227" stroke="#333" stroke-width="0.8" fill="none"/>
<path d="M338 154 Q351 170 354 200 L355.2 395.7 Q343 393 328 393.3 L328.2 227" stroke="#333" stroke-width="0.8" fill="none"/>
<path d="M228.8 303 C225 320 218 345 216.3 372 L216 400 L222.6 524" stroke="#333" stroke-width="0.8" fill="none"/>
<path d="M313.3 303 C317 320 324 345 325.8 372 L326 400 L319 524" stroke="#333" stroke-width="0.8" fill="none"/>
<path d="M261.5 399.3 L271 408 L280.7 399.3 M271 408 L261.5 524 M271 408 L280.7 524" stroke="#333" stroke-width="0.8" fill="none"/>
<path d="M203 154 L228.4 144 M313 144 L338 154" stroke="#2b7fd6" stroke-width="1.6" fill="none"/>
<path d="M228.4 144 L271.3 228 L313 144" stroke="#2b7fd6" stroke-width="1.3" fill="none"/>
<path d="M271.3 228 V302.5" stroke="#2b7fd6" stroke-width="1.3" fill="none"/>
<path d="M228.3 302.5 H313.8" stroke="#2b7fd6" stroke-width="1.3" fill="none"/>
<path d="M203 154 C209 165 212.5 190 212.8 227 L228.3 302.5" stroke="#2b7fd6" stroke-width="1.3" fill="none"/>
<path d="M338 154 C332 165 328.5 190 328.2 227 L313.8 302.5" stroke="#2b7fd6" stroke-width="1.3" fill="none"/>
<path d="M228.3 302.5 C223 318 215 338 214.5 369 L214.6 400 L216.6 504.5 H325.8 L326.8 400 L327.3 369 C327 338 319 318 313.8 302.5" stroke="#2b7fd6" stroke-width="1.3" fill="none"/>
</svg>
<div style="left:841px;top:62px;width:159px;height:463px;background:#f0f0f0;"></div>
<div style="left:999px;top:11.5px;width:1px;height:529.5px;background:#e2e2e2;"></div>
<div style="left:838.6px;top:63.3px;width:159px;height:19.8px;background:#f8f8f8;border:1px solid #d4d4d4;border-radius:3px;"></div>
<svg style="left:844.20px;top:66.86px" width="34.80" height="14.04"><text x="3" y="10.14" font-family="Liberation Sans" font-size="7.8" fill="#2a2a2a" stroke="#2a2a2a" stroke-width="0.06" textLength="28.80" lengthAdjust="spacingAndGlyphs" >Banque :</text></svg>
<svg style="left:881.5px;top:70.3px;" width="7.5" height="7.5" viewBox="0 0 7.5 7.5"><circle cx="3.75" cy="3.75" r="3.2" fill="#fff" stroke="#c8c8c8" stroke-width="0.8"/><circle cx="3.75" cy="3.75" r="1.3" fill="#222"/></svg>
<svg style="left:889.00px;top:67.29px" width="38.10" height="12.06"><text x="3" y="8.71" font-family="Liberation Sans" font-size="6.7" fill="#1e1e1e" stroke="#1e1e1e" stroke-width="0.08" textLength="32.10" lengthAdjust="spacingAndGlyphs" >Projet patron</text></svg>
<svg style="left:944.5px;top:70.3px;" width="7.5" height="7.5" viewBox="0 0 7.5 7.5"><circle cx="3.75" cy="3.75" r="3.2" fill="#fff" stroke="#d0d0d0" stroke-width="0.8"/></svg>
<svg style="left:951.80px;top:67.29px" width="24.00" height="12.06"><text x="3" y="8.71" font-family="Liberation Sans" font-size="6.7" fill="#1e1e1e" stroke="#1e1e1e" stroke-width="0.08" textLength="18.00" lengthAdjust="spacingAndGlyphs" >Modèle</text></svg>
<div style="left:838.6px;top:84.8px;width:159px;height:282.5px;background:#f4f4f4;border:1px solid #d4d4d4;border-radius:0 3px 0 0;"></div>
<div style="left:839.6px;top:85.8px;width:157px;height:10px;background:#f0f0f0;"></div>
<div style="left:842.4px;top:87.2px;width:33px;height:9px;background:#f6f6f6;border:1px solid #d6d6d6;border-bottom:none;"></div>
<div style="left:875.4px;top:84.8px;width:36.8px;height:11.5px;background:#ffffff;border:1px solid #d6d6d6;border-top:1.6px solid #4a90d9;border-bottom:none;"></div>
<div style="left:912.2px;top:87.2px;width:31.4px;height:9px;background:#f6f6f6;border:1px solid #d6d6d6;border-bottom:none;"></div>
<svg style="left:841.00px;top:85.16px" width="36.00" height="12.24"><text x="3" y="8.84" font-family="Liberation Sans" font-size="6.8" fill="#1e1e1e" stroke="#1e1e1e" stroke-width="0.08" textLength="30.00" lengthAdjust="spacingAndGlyphs" >0 Homme(s)</text></svg>
<svg style="left:877.00px;top:84.03px" width="34.80" height="12.42"><text x="3" y="8.97" font-family="Liberation Sans" font-size="6.9" fill="#1e1e1e" stroke="#1e1e1e" stroke-width="0.08" textLength="28.80" lengthAdjust="spacingAndGlyphs" >2 Femme(s)</text></svg>
<svg style="left:911.00px;top:85.16px" width="32.70" height="12.24"><text x="3" y="8.84" font-family="Liberation Sans" font-size="6.8" fill="#1e1e1e" stroke="#1e1e1e" stroke-width="0.08" textLength="26.70" lengthAdjust="spacingAndGlyphs" >0 Enfant(s)</text></svg>
<div style="left:839.6px;top:95.8px;width:157px;height:1px;background:#d6d6d6;"></div>
<div style="left:875.9px;top:95.2px;width:35.8px;height:1.6px;background:#ffffff;"></div>
<div style="left:842.5px;top:98px;width:151.7px;height:28.8px;background:#f8f8f8;border:1px solid #dcdcdc;border-radius:2px;"></div>
<svg style="left:848.00px;top:99.29px" width="30.00" height="12.06"><text x="3" y="8.71" font-family="Liberation Sans" font-size="6.7" fill="#1e1e1e" stroke="#1e1e1e" stroke-width="0.08" textLength="24.00" lengthAdjust="spacingAndGlyphs" >Quantité :</text></svg>
<svg style="left:879.50px;top:99.29px" width="8.70" height="12.06"><text x="3" y="8.71" font-family="Liberation Sans" font-size="6.7" fill="#1e1e1e" stroke="#1e1e1e" stroke-width="0.08" textLength="2.70" lengthAdjust="spacingAndGlyphs" >2</text></svg>
<svg style="left:887.00px;top:99.29px" width="27.00" height="12.06"><text x="3" y="8.71" font-family="Liberation Sans" font-size="6.7" fill="#1e1e1e" stroke="#1e1e1e" stroke-width="0.08" textLength="21.00" lengthAdjust="spacingAndGlyphs" >(Femme)</text></svg>
<svg style="left:848.00px;top:107.29px" width="19.80" height="12.06"><text x="3" y="8.71" font-family="Liberation Sans" font-size="6.7" fill="#1e1e1e" stroke="#1e1e1e" stroke-width="0.08" textLength="13.80" lengthAdjust="spacingAndGlyphs" >Nom :</text></svg>
<svg style="left:869.80px;top:107.29px" width="89.80" height="12.06"><text x="3" y="8.71" font-family="Liberation Sans" font-size="6.7" fill="#1e1e1e" stroke="#1e1e1e" stroke-width="0.08" textLength="83.80" lengthAdjust="spacingAndGlyphs" >robe cintre 2-11_11_-34-120-120-I</text></svg>
<svg style="left:961px;top:106.8px;" width="9.5" height="9" viewBox="0 0 9.5 9"><path d="M7.5 2.5 A3.8 3.8 0 0 0 1 3.7" stroke="#444" stroke-width="1.3" fill="none"/><path d="M2 6.5 A3.8 3.8 0 0 0 8.5 5.3" stroke="#444" stroke-width="1.3" fill="none"/></svg>
<div style="left:973.6px;top:103.7px;width:15.7px;height:14.9px;background:#f1f1f1;border:1px solid #dcdcdc;"></div>
<svg style="left:977.5px;top:107.3px;" width="8" height="8" viewBox="0 0 8 8"><path d="M1.2 1.2 L6.8 6.8 M6.8 1.2 L1.2 6.8" stroke="#e32222" stroke-width="1.1"/></svg>
<div style="left:843.5px;top:127.2px;width:151px;height:237.3px;background:#e2e2e2;border:1px solid #d0d0d0;"></div>
<div style="left:849px;top:134.2px;width:131.2px;height:167.6px;background:#ffffff;"></div>
<div style="left:849px;top:307.4px;width:131.2px;height:56px;background:#ffffff;"></div>
<div style="left:984.5px;top:128.2px;width:9px;height:236px;background:#f0f0f0;"></div>
<svg style="left:986.5px;top:131.5px;" width="5" height="3" viewBox="0 0 5 3"><path d="M0.3 2.7 L2.5 0.3 L4.7 2.7Z" fill="#111"/></svg>
<div style="left:986.3px;top:138px;width:5.5px;height:145.7px;background:#8a8a8a;border-radius:2px;"></div>
<svg style="left:986.5px;top:357.5px;" width="5" height="3" viewBox="0 0 5 3"><path d="M0.3 0.3 L2.5 2.7 L4.7 0.3Z" fill="#111"/></svg>
<svg style="left:0;top:0" width="1000" height="541" viewBox="0 0 1000 541">
<path d="M850 134.5 h1" stroke="#e88" stroke-width="1"/>
<path d="M898 155 L914.3 175.5 L930.3 155.5" stroke="#ee4444" stroke-width="0.8" fill="none"/>
<circle cx="898" cy="155" r="0.9" fill="#e22"/><circle cx="930.3" cy="155.5" r="0.9" fill="#e22"/>
<path d="M888.3 159 Q893 167 894.5 177" stroke="#3a3a3a" stroke-width="0.8" fill="none"/><circle cx="894.5" cy="177" r="0.9" fill="#e22"/>
<path d="M940.5 158.5 Q936 167 934 177" stroke="#3a3a3a" stroke-width="0.8" fill="none"/><circle cx="940.5" cy="158.5" r="0.9" fill="#e22"/><circle cx="934" cy="177" r="0.9" fill="#e22"/>
<path d="M898.5 193.8 H931.8" stroke="#ee4444" stroke-width="0.8" fill="none"/><circle cx="898.5" cy="193.8" r="0.9" fill="#e22"/><circle cx="914.5" cy="193.8" r="0.9" fill="#e22"/><circle cx="931.8" cy="193.8" r="0.9" fill="#e22"/>
<path d="M898.5 193.8 Q894.5 200 894 207 V210.5 M893.8 222 V232.5 M893.8 238.5 V243" stroke="#3a3a3a" stroke-width="0.8" fill="none"/>
<path d="M931.8 193.8 Q936 200 936 207 V235 M936 238.5 V243.5" stroke="#3a3a3a" stroke-width="0.8" fill="none"/><circle cx="936" cy="244.2" r="0.9" fill="#e22"/>
<path d="M885 329.5 Q895 327 903.5 327.1" stroke="#f4a0a0" stroke-width="0.7" fill="none" stroke-dasharray="1.5 1.5"/>
<path d="M925 327.1 Q937 328 948.4 331.3" stroke="#f4a0a0" stroke-width="0.7" fill="none" stroke-dasharray="1.5 1.5"/>
<path d="M903.5 327.1 L914.4 337.7 L925 327.1" stroke="#ee4444" stroke-width="0.8" fill="none"/><circle cx="903.5" cy="327.1" r="0.9" fill="#e22"/><circle cx="925" cy="327.1" r="0.9" fill="#e22"/><circle cx="948.4" cy="331.3" r="0.9" fill="#e22"/>
<path d="M880.6 331.3 Q886 340 888 349" stroke="#333" stroke-width="0.7" fill="none"/><circle cx="888" cy="349" r="0.9" fill="#e22"/>
<path d="M948.4 331.3 Q942 340 940.4 349" stroke="#333" stroke-width="0.7" fill="none"/><circle cx="940.4" cy="349" r="0.9" fill="#e22"/>
</svg>
<div style="left:841.3px;top:367.4px;width:154.7px;height:46.2px;background:#f4f4f4;border:1px solid #d6d6d6;border-top:none;"></div>
<div style="left:849.5px;top:372.4px;width:15.2px;height:17.3px;background:#ececec;border:1px solid #d6d6d6;"></div>
<div style="left:864.8px;top:372.4px;width:15.2px;height:17.3px;background:#ececec;border:1px solid #d6d6d6;"></div>
<div style="left:880.5px;top:372.4px;width:15.2px;height:17.3px;background:#ececec;border:1px solid #d6d6d6;"></div>
<svg style="left:0;top:0" width="1000" height="541" viewBox="0 0 1000 541"><g fill="#747474"><circle cx="856.7" cy="378.6" r="2.5"/><path d="M852 386 Q852.3 382.3 856.7 382 Q861.1 382.3 861.6 386Z"/><path d="M869.5 381.5 Q869 375.5 873 375.5 Q877 375.5 876.5 381.5 L877 384 L869 384Z"/><path d="M868.3 386 Q868.6 383 873 382.8 Q877.4 383 877.7 386Z"/><circle cx="889.7" cy="379.2" r="2.3"/><path d="M885.5 377 Q887 375 889.7 375.5 Q892.4 375 894 377 L893 378 Q889.7 376.3 886.5 378Z"/><path d="M885.5 386 Q885.8 383 889.7 382.8 Q893.6 383 893.9 386Z"/></g><g fill="#fafafa"><circle cx="856.7" cy="379.2" r="1.4"/><circle cx="873" cy="379.3" r="1.6"/><circle cx="889.7" cy="379.7" r="1.3"/></g></svg>
<div style="left:965.4px;top:380px;width:7px;height:7px;background:#fff;border:1px solid #c8c8c8;"></div>
<svg style="left:972.40px;top:376.29px" width="17.30" height="12.06"><text x="3" y="8.71" font-family="Liberation Sans" font-size="6.7" fill="#1e1e1e" stroke="#1e1e1e" stroke-width="0.08" textLength="11.30" lengthAdjust="spacingAndGlyphs" >Auto</text></svg>
<svg style="left:851.30px;top:394.77px" width="53.70" height="12.78"><text x="3" y="9.23" font-family="Liberation Sans" font-size="7.1" fill="#1e1e1e" stroke="#1e1e1e" stroke-width="0.08" textLength="47.70" lengthAdjust="spacingAndGlyphs" >Filtrer par type :</text></svg>
<div style="left:906.8px;top:396.3px;width:75.6px;height:10.7px;background:#ffffff;border:1px solid #d8d8d8;"></div>
<svg style="left:905.70px;top:395.29px" width="37.50" height="12.06"><text x="3" y="8.71" font-family="Liberation Sans" font-size="6.7" fill="#1e1e1e" stroke="#1e1e1e" stroke-width="0.08" textLength="31.50" lengthAdjust="spacingAndGlyphs" >Robe cintrée</text></svg>
<svg style="left:975px;top:400px;" width="6" height="4" viewBox="0 0 6 4"><path d="M0.5 0.5 L3 3.3 L5.5 0.5Z" fill="#222"/></svg>
<div style="left:839.8px;top:413.6px;width:157px;height:110.2px;background:#f0f0f0;border:1px solid #d4d4d4;border-top:none;"></div>
<div style="left:846px;top:416.8px;width:148.8px;height:99.7px;background:#f7f7f7;border:1px solid #dcdcdc;"></div>
<svg style="left:892.20px;top:420.29px" width="50.60" height="12.06"><text x="3" y="8.71" font-family="Liberation Sans" font-size="6.7" fill="#222" stroke="#222" stroke-width="0.14" textLength="44.60" lengthAdjust="spacingAndGlyphs" font-weight="bold">Projet en cours</text></svg>
<svg style="left:850.20px;top:433.29px" width="24.80" height="12.06"><text x="3" y="8.71" font-family="Liberation Sans" font-size="6.7" fill="#1e1e1e" stroke="#1e1e1e" stroke-width="0.08" textLength="18.80" lengthAdjust="spacingAndGlyphs" >Année-></text></svg>
<svg style="left:873.80px;top:433.29px" width="17.40" height="12.06"><text x="3" y="8.71" font-family="Liberation Sans" font-size="6.7" fill="#1e1e1e" stroke="#1e1e1e" stroke-width="0.08" textLength="11.40" lengthAdjust="spacingAndGlyphs" >2021</text></svg>
<svg style="left:849.20px;top:445.29px" width="31.80" height="12.06"><text x="3" y="8.71" font-family="Liberation Sans" font-size="6.7" fill="#1e1e1e" stroke="#1e1e1e" stroke-width="0.08" textLength="25.80" lengthAdjust="spacingAndGlyphs" >Classeur -></text></svg>
<svg style="left:881.70px;top:445.29px" width="63.50" height="12.06"><text x="3" y="8.71" font-family="Liberation Sans" font-size="6.7" fill="#1e1e1e" stroke="#1e1e1e" stroke-width="0.08" textLength="57.50" lengthAdjust="spacingAndGlyphs" >Exemples de Patron v3</text></svg>
<svg style="left:849.20px;top:456.29px" width="40.50" height="12.06"><text x="3" y="8.71" font-family="Liberation Sans" font-size="6.7" fill="#1e1e1e" stroke="#1e1e1e" stroke-width="0.08" textLength="34.50" lengthAdjust="spacingAndGlyphs" >Type : Patron</text></svg>
<svg style="left:849.20px;top:468.29px" width="37.00" height="12.06"><text x="3" y="8.71" font-family="Liberation Sans" font-size="6.7" fill="#1e1e1e" stroke="#1e1e1e" stroke-width="0.08" textLength="31.00" lengthAdjust="spacingAndGlyphs" >Largeur : 84</text></svg>
<svg style="left:893.30px;top:468.29px" width="55.40" height="12.06"><text x="3" y="8.71" font-family="Liberation Sans" font-size="6.7" fill="#1e1e1e" stroke="#1e1e1e" stroke-width="0.08" textLength="49.40" lengthAdjust="spacingAndGlyphs" >/ Hauteur : 180 cm</text></svg>
<svg style="left:849.20px;top:480.29px" width="55.80" height="12.06"><text x="3" y="8.71" font-family="Liberation Sans" font-size="6.7" fill="#1e1e1e" stroke="#1e1e1e" stroke-width="0.08" textLength="49.80" lengthAdjust="spacingAndGlyphs" >Tableau mesure : ...</text></svg>
<svg style="left:0;top:0" width="1000" height="541" viewBox="0 0 1000 541"><g fill="none" stroke="#4a4a4a" stroke-width="0.8" stroke-linejoin="round"><path d="M964.2 435.2 Q963.5 432.5 966 432 Q966.8 429 969.5 429.2 Q972 429 972.5 431.5 Q974 432.5 973.6 435.2Z"/><path d="M965.6 437.8 L968.2 437.8 L968.2 447.8 L963.3 447.8Z"/><path d="M970.3 437.8 L972.4 437.8 L972.8 441 L974.8 442.3 L974.8 446.4 L970.3 446.4Z"/><path d="M977.8 428.5 L980.9 428.5 L981.5 432 L983.3 434.2 L983 448.2 L978.2 448.2Z"/></g></svg>
<svg style="left:963.10px;top:449.42px" width="21.20" height="11.88"><text x="3" y="8.58" font-family="Liberation Sans" font-size="6.6" fill="#333" stroke="#333" stroke-width="0.14" textLength="15.20" lengthAdjust="spacingAndGlyphs" font-style="italic">NEW</text></svg>
<svg style="left:861px;top:500.5px;" width="12" height="10" viewBox="0 0 12 10"><path d="M1.2 4 Q1.2 0.8 5.2 0.8 Q9.2 0.8 9.2 4 Q9.2 6.8 5.2 6.8 L2.8 8.6 L3.3 6.3 Q1.2 5.6 1.2 4Z" fill="none" stroke="#5a5f68" stroke-width="0.95"/><path d="M9 5.5 Q11 6 10.8 7.5 L10.5 9.3 L8.5 8 Q7 8.2 6.5 7.2" fill="none" stroke="#5a5f68" stroke-width="0.8"/></svg>
<svg style="left:888px;top:502px;" width="10.5" height="7" viewBox="0 0 10.5 7"><path d="M1.5 0.4 H8.5 L9.8 4.2 H0.2Z" fill="#465060"/><rect x="0.5" y="4.2" width="9.3" height="2.2" fill="#e6e8ec" stroke="#465060" stroke-width="0.6"/></svg>
<svg style="left:912.8px;top:502px;" width="17" height="7" viewBox="0 0 17 7"><path d="M1.5 0.4 H8.5 L9.8 4.2 H0.2Z" fill="#465060"/><rect x="0.5" y="4.2" width="9.3" height="2.2" fill="#e6e8ec" stroke="#465060" stroke-width="0.6"/><path d="M11.5 4.4 L13.5 2.8 V3.7 H15.8 V5.1 H13.5 V6 Z" fill="none" stroke="#777" stroke-width="0.5"/></svg>
<svg style="left:959px;top:499px;" width="17" height="13" viewBox="0 0 17 13"><path d="M8.5 1.6 H13.2 V5 M9 10.2 H1.8 V1.6 H8.5" stroke="#555" stroke-width="1.4" fill="none" stroke-linejoin="round"/><path d="M4.5 5 Q8 5.5 10.3 8.3 L11.3 6.8 L15.8 9.5 L11 12.2 L11.3 10.5 Q7.5 9.5 4.5 5Z" fill="#5a6068"/></svg>
<div style="left:0px;top:524.5px;width:1000px;height:16.5px;background:#efefef;border-top:1px solid #d8d8d8;"></div>
<div style="left:76.25px;top:526px;width:1px;height:15px;background:#d6d6d6;"></div>
<div style="left:153.75px;top:526px;width:1px;height:15px;background:#d6d6d6;"></div>
<div style="left:298.75px;top:526px;width:1px;height:15px;background:#d6d6d6;"></div>
<div style="left:455px;top:526px;width:1px;height:15px;background:#d6d6d6;"></div>
<div style="left:690px;top:526px;width:1px;height:15px;background:#d6d6d6;"></div>
<svg style="left:-1.00px;top:528.29px" width="41.50" height="12.06"><text x="3" y="8.71" font-family="Liberation Sans" font-size="6.7" fill="#333" stroke="#333" stroke-width="0.05" textLength="35.50" lengthAdjust="spacingAndGlyphs" >Bonjour 33672</text></svg>
<svg style="left:77.00px;top:528.29px" width="44.75" height="12.06"><text x="3" y="8.71" font-family="Liberation Sans" font-size="6.7" fill="#1e1e1e" stroke="#1e1e1e" stroke-width="0.05" textLength="38.75" lengthAdjust="spacingAndGlyphs" >Hour : 10:22:57</text></svg>
<svg style="left:155.00px;top:528.29px" width="84.25" height="12.06"><text x="3" y="8.71" font-family="Liberation Sans" font-size="6.7" fill="#1e1e1e" stroke="#1e1e1e" stroke-width="0.05" textLength="78.25" lengthAdjust="spacingAndGlyphs" >PATRON v3 (Version complète)</text></svg>
<svg style="left:300.75px;top:528.29px" width="123.50" height="12.06"><text x="3" y="8.71" font-family="Liberation Sans" font-size="6.7" fill="#1e1e1e" stroke="#1e1e1e" stroke-width="0.05" textLength="117.50" lengthAdjust="spacingAndGlyphs" >Fichier-> robe cintre 2-11_11_-34-120-120-F.pat</text></svg>
<svg style="left:457.40px;top:528.29px" width="214.35" height="12.06"><text x="3" y="8.71" font-family="Liberation Sans" font-size="6.7" fill="#1e1e1e" stroke="#1e1e1e" stroke-width="0.05" textLength="208.35" lengthAdjust="spacingAndGlyphs" >Taille : 34  Print format : 120 DPI  | X: 6616 p  / Y: 14028 p  | (L=84cm / H=120cm)</text></svg>
<svg style="left:691.50px;top:528.29px" width="46.50" height="12.06"><text x="3" y="8.71" font-family="Liberation Sans" font-size="6.7" fill="#1e1e1e" stroke="#1e1e1e" stroke-width="0.05" textLength="40.50" lengthAdjust="spacingAndGlyphs" >Licence : Active</text></svg>
<svg style="left:990px;top:532px;" width="9" height="9" viewBox="0 0 9 9"><path d="M8 1 L1 8 M8 4 L4 8 M8 7 L7 8" stroke="#bbb" stroke-width="0.8"/></svg>
</body></html>
